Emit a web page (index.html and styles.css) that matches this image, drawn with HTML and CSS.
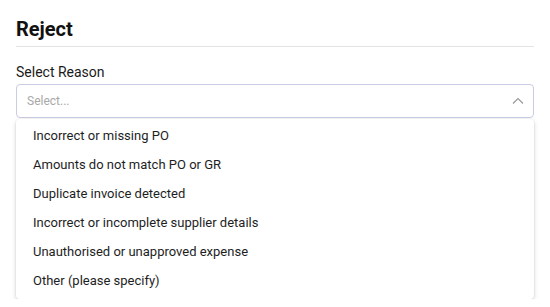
FILE: index.html
```html
<!DOCTYPE html>
<html>
<head>
<meta charset="utf-8">
<link rel="stylesheet" href="styles.css">
</head>
<body>
<div class="panel">
  <h1 class="title">Reject</h1>
  <div class="divider"></div>
  <label class="label">Select Reason</label>
  <div class="select">
    <span class="placeholder">Select...</span>
    <svg class="chevron" width="12" height="8" viewBox="0 0 12 8"><path d="M1 6.5 L6 1.5 L11 6.5" fill="none" stroke="#9a9a9a" stroke-width="1.2"/></svg>
  </div>
  <ul class="menu">
    <li class="option">Incorrect or missing PO</li>
    <li class="option">Amounts do not match PO or GR</li>
    <li class="option">Duplicate invoice detected</li>
    <li class="option">Incorrect or incomplete supplier details</li>
    <li class="option">Unauthorised or unapproved expense</li>
    <li class="option">Other (please specify)</li>
  </ul>
</div>
</body>
</html>
```

FILE: styles.css
```css
html, body {
  margin: 0;
  padding: 0;
  background: #ffffff;
}
body {
  font-family: Roboto, "Liberation Sans", sans-serif;
  color: #1a1a1a;
}
.panel {
  padding: 17px 16px 0 16px;
  display: flex;
  flex-direction: column;
}
.title {
  margin: 0;
  font-size: 20px;
  line-height: 24px;
  font-weight: 700;
  color: #111;
}
.divider {
  margin-top: 5px;
  height: 1px;
  background: #e4e4e4;
}
.label {
  margin-top: 15px;
  font-size: 14px;
  line-height: 20px;
  color: #1a1a1a;
}
.select {
  margin-top: 2px;
  height: 34px;
  box-sizing: border-box;
  border: 1px solid #c9cde3;
  border-radius: 4px;
  display: flex;
  align-items: center;
  justify-content: space-between;
  padding: 0 9px 0 10px;
}
.placeholder {
  font-size: 12px;
  color: #a8a8a8;
}
.chevron {
  display: block;
}
.menu {
  list-style: none;
  margin: 1px 0 0 0;
  padding: 2px 0 4px 0;
  border-radius: 4px;
  background: #fff;
  box-shadow: 0 2px 5px rgba(0,0,0,0.16), 0 0 0 1px rgba(0,0,0,0.03);
}
.option {
  height: 29px;
  display: flex;
  align-items: center;
  padding: 0 17px;
  font-size: 13px;
  color: #1e1e1e;
}
```
